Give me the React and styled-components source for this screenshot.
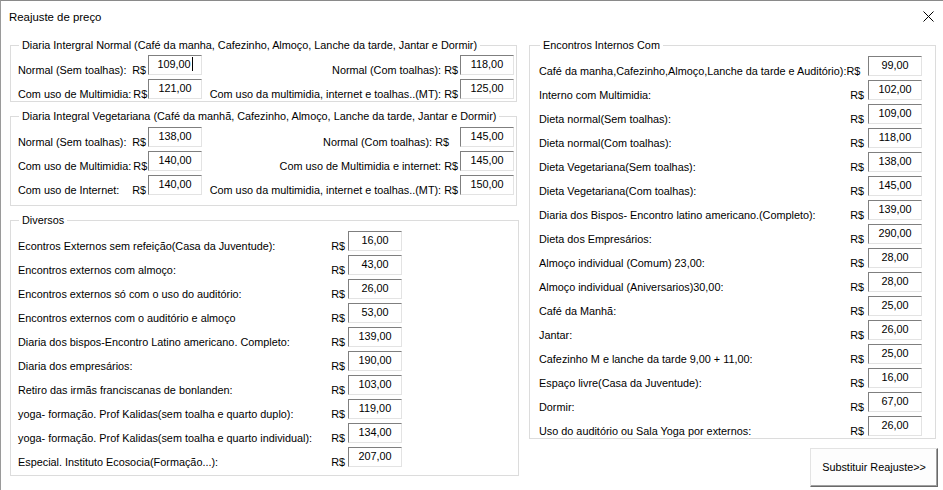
import React from "react";
import styled, { createGlobalStyle } from "styled-components";

const GlobalStyle = createGlobalStyle`
  html, body {
    margin: 0;
    padding: 0;
    background: #fff;
  }
  body {
    font-family: "Liberation Sans", Arial, sans-serif;
    font-size: 10.85px;
    color: #000;
  }
`;

const Window = styled.div`
  width: 943px;
  height: 490px;
  box-sizing: border-box;
  border-top: 1px solid #8a8a8a;
  border-left: 1px solid #9a9a9a;
  background: #fff;
  display: flex;
  flex-direction: column;
`;

const TitleBar = styled.div`
  height: 31px;
  display: flex;
  align-items: center;
  justify-content: space-between;
  padding: 0 9px 0 8px;
  flex: none;
`;

const Title = styled.span`
  font-size: 11.4px;
  margin-top: 1px;
`;

const Close = styled.span`
  display: flex;
  width: 12px;
  height: 12px;
  align-items: center;
  justify-content: center;
  margin-top: -1px;
`;

const Body = styled.div`
  display: flex;
  gap: 10px;
  padding: 7px 0 0 9px;
`;

const Column = styled.div`
  display: flex;
  flex-direction: column;
  gap: 8px;
  width: ${(p) => p.$w}px;
`;

const Group = styled.fieldset`
  margin: 0;
  min-width: 0;
  width: ${(p) => p.$w}px;
  box-sizing: border-box;
  border: 1px solid #dcdcdc;
  padding: ${(p) => p.$pt}px 2px ${(p) => p.$pb}px ${(p) => p.$pl}px;
`;

const Legend = styled.legend`
  padding: 0 3px;
  margin-left: ${(p) => p.$ml ?? 1}px;
  line-height: 13px;
`;

const PairRow = styled.div`
  display: grid;
  grid-template-columns: 130px 54px 1fr 54px;
  height: 24px;
  align-items: center;
`;

const LeftCell = styled.div`
  display: flex;
  justify-content: space-between;
  gap: 2px;
  align-self: end;
  line-height: 14px;
  padding-right: 2px;
  white-space: nowrap;
`;

const RightCell = styled.div`
  display: flex;
  justify-content: flex-end;
  gap: 3px;
  align-self: end;
  line-height: 14px;
  padding-right: ${(p) => p.$pad || 2}px;
  white-space: nowrap;
`;

const Row = styled.div`
  display: grid;
  grid-template-columns: ${(p) => p.$label}px 24px 54px;
  height: 24px;
  align-items: center;
`;

const Label = styled.span`
  align-self: end;
  line-height: 14px;
  white-space: nowrap;
  grid-column: ${(p) => (p.$span ? "span 2" : "auto")};
`;

const Currency = styled.span`
  align-self: end;
  line-height: 14px;
  text-align: right;
  padding-right: ${(p) => p.$pad ?? 3}px;
`;

const Box = styled.div`
  height: 20px;
  box-sizing: border-box;
  border-style: solid;
  border-width: 1px;
  border-color: #7f7f7f #e3e3e3 #e3e3e3 #7f7f7f;
  display: flex;
  align-items: center;
  justify-content: center;
  padding-bottom: 2px;
  line-height: 14px;
`;

const Caret = styled.span`
  display: inline-block;
  width: 1px;
  height: 14px;
  background: #000;
  margin-left: 1px;
`;

const ButtonRow = styled.div`
  display: flex;
  justify-content: flex-end;
  margin: 1px -2px 0 0;
`;

const Button = styled.button`
  width: 128px;
  height: 39px;
  background: #fdfdfd;
  border-style: solid;
  border-width: 1px;
  border-color: #e3e3e3 #696969 #696969 #e3e3e3;
  box-shadow: inset -1px -1px 0 #a0a0a0;
  font-family: "Liberation Sans", Arial, sans-serif;
  font-size: 10.85px;
  color: #000;
  padding: 0 0 1px;
`;

const Value = ({ v, focused }) => (
  <Box>
    {v}
    {focused && <Caret />}
  </Box>
);

const normal = [
  { l: "Normal (Sem toalhas):", lv: "109,00", focus: true, r: "Normal (Com toalhas):", rv: "118,00" },
  { l: "Com uso de Multimidia:", lv: "121,00", r: "Com uso da multimidia, internet e toalhas..(MT):", rv: "125,00" },
];

const vegetariana = [
  { l: "Normal (Sem toalhas):", lv: "138,00", r: "Normal (Com toalhas):", rv: "145,00", pad: 11 },
  { l: "Com uso de Multimidia:", lv: "140,00", r: "Com uso de Multimidia e internet:", rv: "145,00" },
  { l: "Com uso de Internet:", lv: "140,00", r: "Com uso da multimidia, internet e toalhas..(MT):", rv: "150,00" },
];

const diversos = [
  ["Econtros Externos sem refeição(Casa da Juventude):", "16,00"],
  ["Encontros externos com almoço:", "43,00"],
  ["Encontros externos só com o uso do auditório:", "26,00"],
  ["Encontros externos com o auditório e almoço", "53,00"],
  ["Diaria dos bispos-Encontro Latino americano. Completo:", "139,00"],
  ["Diaria dos empresários:", "190,00"],
  ["Retiro das irmãs franciscanas de bonlanden:", "103,00"],
  ["yoga- formação. Prof Kalidas(sem toalha e quarto duplo):", "119,00"],
  ["yoga- formação. Prof Kalidas(sem toalha e quarto individual):", "134,00"],
  ["Especial. Instituto Ecosocia(Formação...):", "207,00"],
];

const internos = [
  ["Interno com Multimidia:", "102,00"],
  ["Dieta normal(Sem toalhas):", "109,00"],
  ["Dieta normal(Com toalhas):", "118,00"],
  ["Dieta Vegetariana(Sem toalhas):", "138,00"],
  ["Dieta Vegetariana(Com toalhas):", "145,00"],
  ["Diaria dos Bispos- Encontro latino americano.(Completo):", "139,00"],
  ["Dieta dos Empresários:", "290,00"],
  ["Almoço individual (Comum) 23,00:", "28,00"],
  ["Almoço individual (Aniversarios)30,00:", "28,00"],
  ["Café da Manhã:", "25,00"],
  ["Jantar:", "26,00"],
  ["Cafezinho M e lanche da tarde 9,00 + 11,00:", "25,00"],
  ["Espaço livre(Casa da Juventude):", "16,00"],
  ["Dormir:", "67,00"],
  ["Uso do auditório ou Sala Yoga por externos:", "26,00"],
];

const PairRows = ({ rows }) =>
  rows.map((r, i) => (
    <PairRow key={i}>
      <LeftCell>
        <span>{r.l}</span>
        <span>R$</span>
      </LeftCell>
      <Value v={r.lv} focused={r.focus} />
      <RightCell $pad={r.pad}>
        <span>{r.r}</span>
        <span>R$</span>
      </RightCell>
      <Value v={r.rv} />
    </PairRow>
  ));

export default function App() {
  return (
    <>
      <GlobalStyle />
      <Window>
        <TitleBar>
          <Title>Reajuste de preço</Title>
          <Close>
            <svg width="11" height="11" viewBox="0 0 11 11">
              <path d="M0.5 0.5 L10.5 10.5 M10.5 0.5 L0.5 10.5" stroke="#000" strokeWidth="1" fill="none" />
            </svg>
          </Close>
        </TitleBar>
        <Body>
          <Column $w={509}>
            <Group $w={507} $pt={1} $pb={0} $pl={7}>
              <Legend>Diaria Intergral Normal (Café da manha, Cafezinho, Almoço, Lanche da tarde, Jantar e Dormir)</Legend>
              <PairRows rows={normal} />
            </Group>
            <Group $w={507} $pt={2} $pb={8} $pl={7}>
              <Legend>Diaria Integral Vegetariana (Café da manhã, Cafezinho, Almoço, Lanche da tarde, Jantar e Dormir)</Legend>
              <PairRows rows={vegetariana} />
            </Group>
            <Group $w={509} $pt={2} $pb={6} $pl={7}>
              <Legend>Diversos</Legend>
              {diversos.map(([l, v], i) => (
                <Row key={i} $label={306}>
                  <Label>{l}</Label>
                  <Currency>R$</Currency>
                  <Value v={v} />
                </Row>
              ))}
            </Group>
          </Column>
          <Column $w={407}>
            <Group $w={407} $pt={2} $pb={0} $pl={9}>
              <Legend>Encontros Internos Com</Legend>
              <Row $label={305}>
                <Label $span>Café da manha,Cafezinho,Almoço,Lanche da tarde e Auditório):R$</Label>
                <Value v="99,00" />
              </Row>
              {internos.map(([l, v], i) => (
                <Row key={i} $label={305}>
                  <Label>{l}</Label>
                  <Currency $pad={4}>R$</Currency>
                  <Value v={v} />
                </Row>
              ))}
            </Group>
            <ButtonRow>
              <Button>Substituir Reajuste&gt;&gt;</Button>
            </ButtonRow>
          </Column>
        </Body>
      </Window>
    </>
  );
}
